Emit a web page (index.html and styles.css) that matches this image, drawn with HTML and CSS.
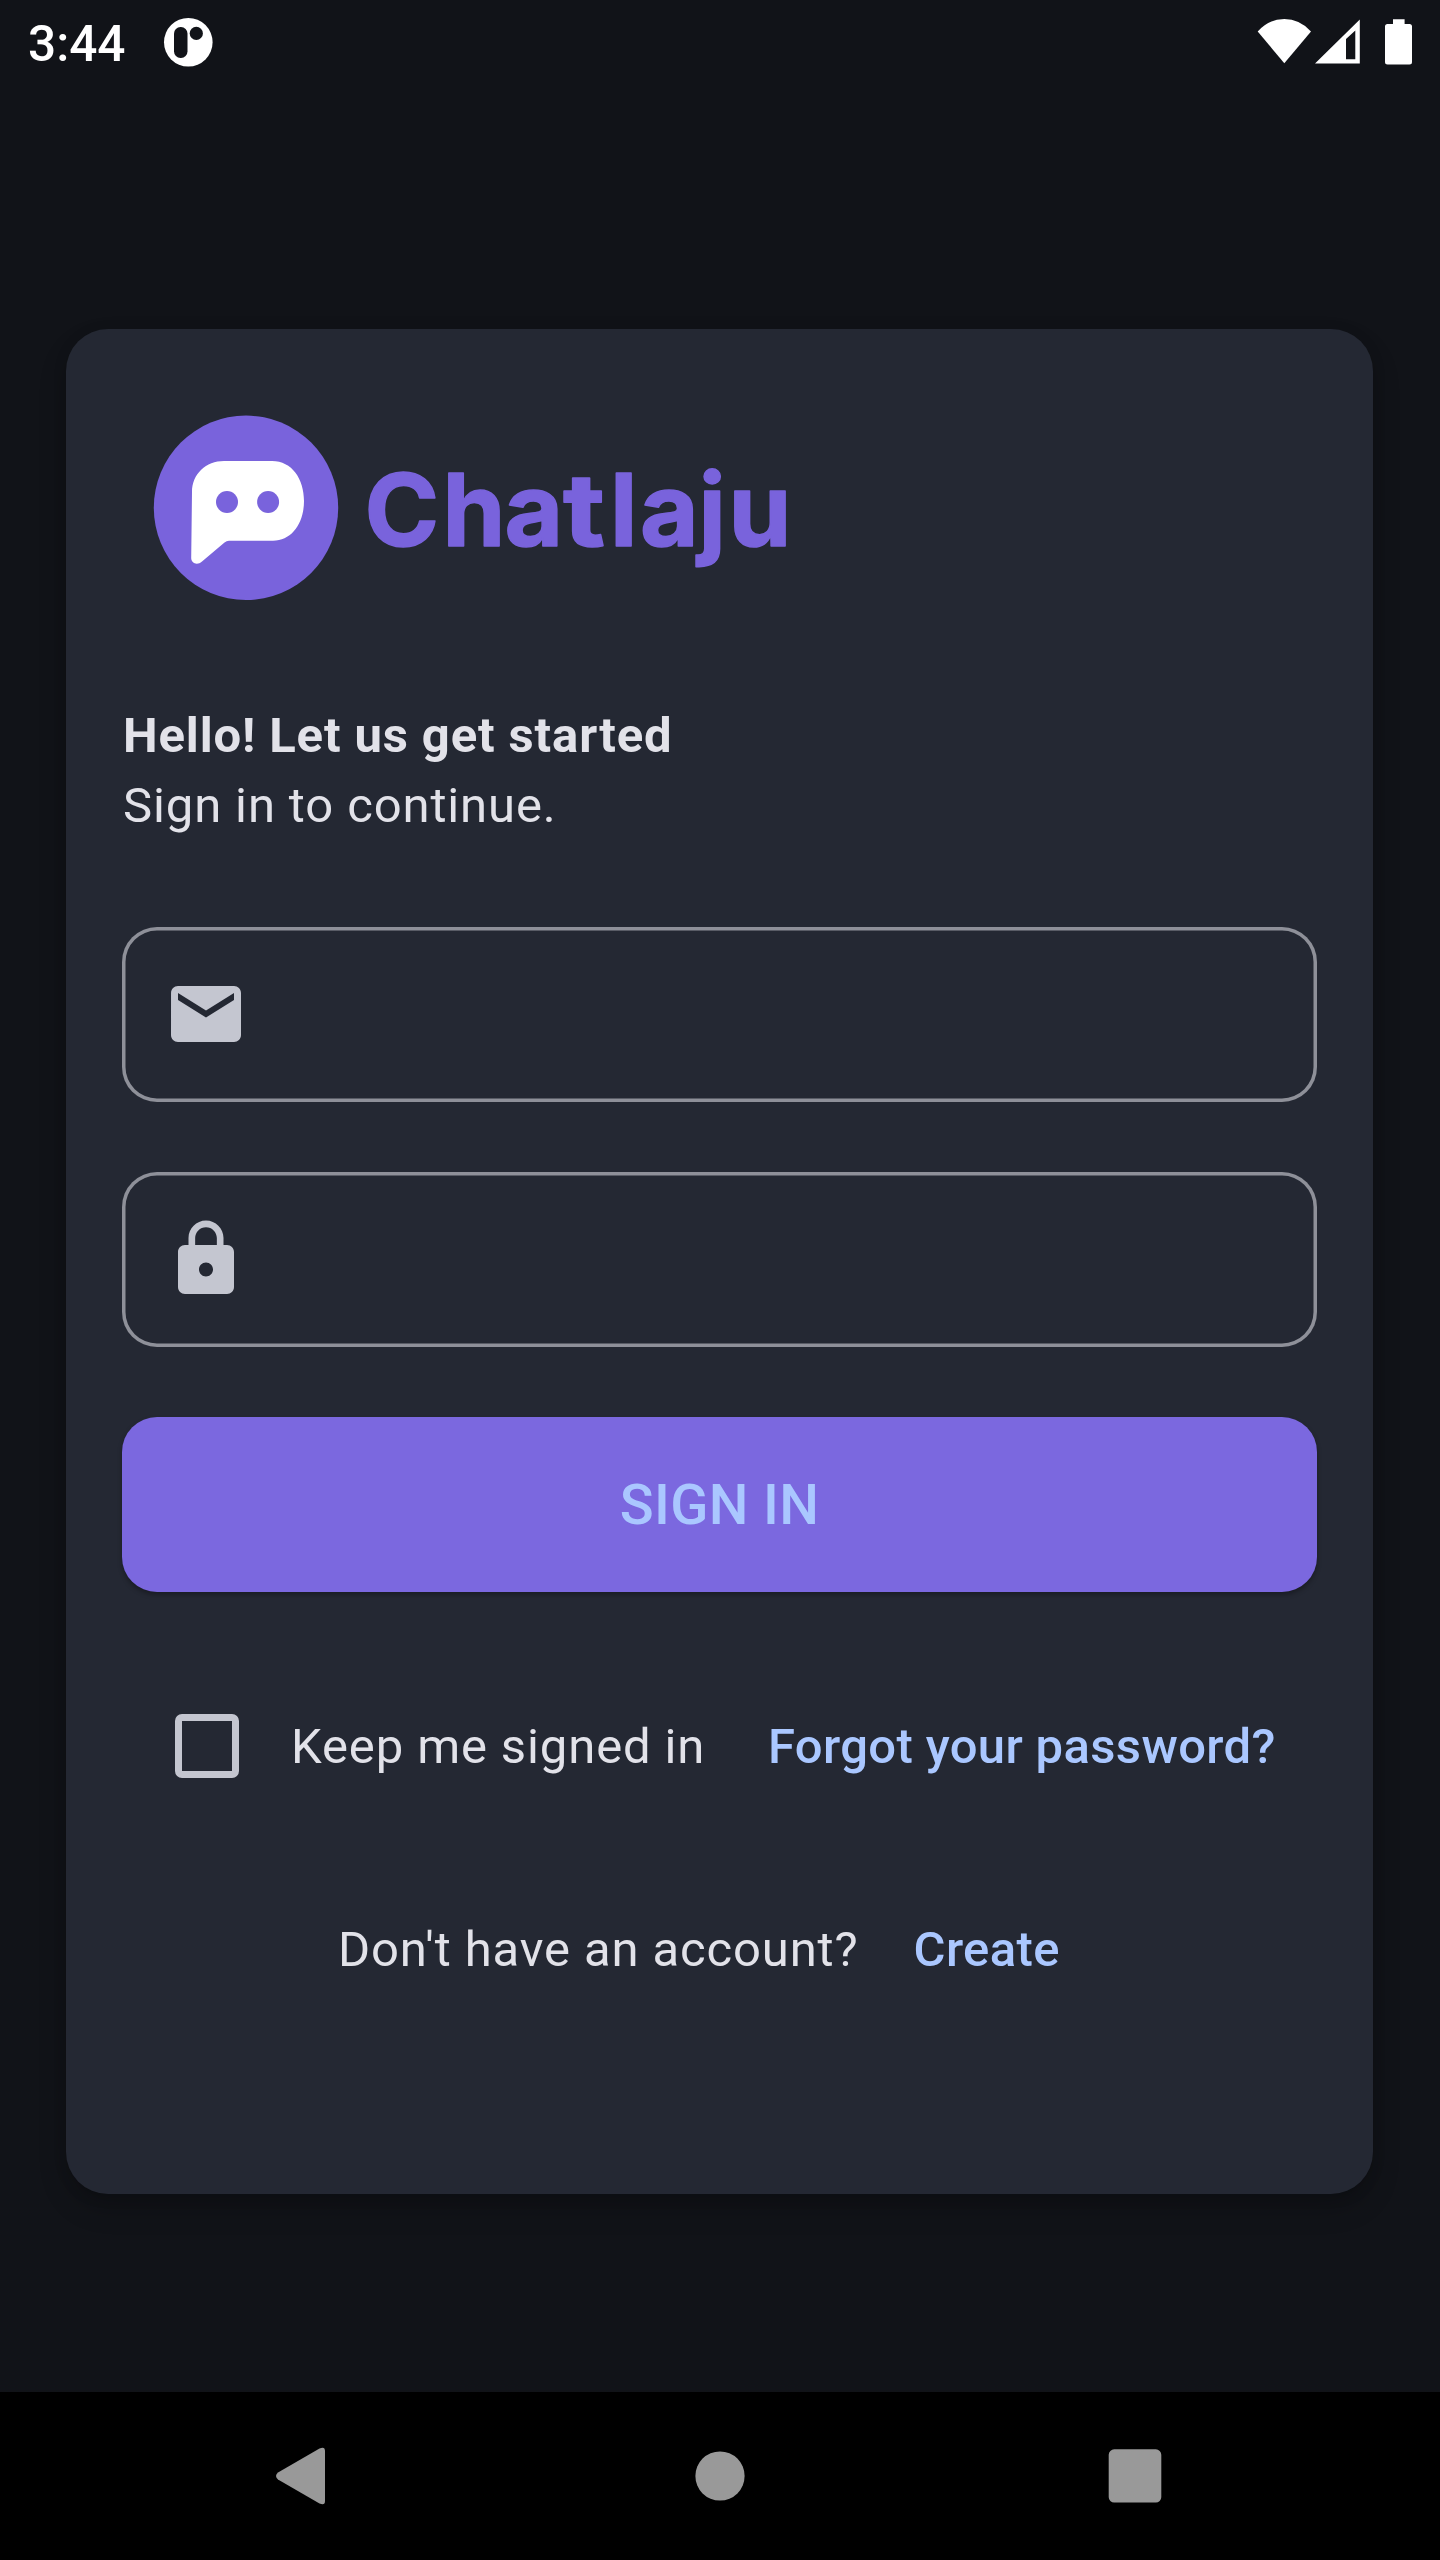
FILE: index.html
```
<!DOCTYPE html>
<html lang="en">
<head>
<meta charset="utf-8">
<title>Chatlaju</title>
<link rel="stylesheet" href="styles.css">
</head>
<body>
<header class="status">
  <span class="clock">3:44</span>
  <svg class="app-dot" width="50" height="50" viewBox="163 17 50 50">
    <circle cx="188.3" cy="42.3" r="24.3" fill="#fff"/>
    <rect x="174" y="27" width="13.5" height="31" rx="6.5" fill="#111318"/>
    <circle cx="196.3" cy="33.4" r="6.6" fill="#111318"/>
  </svg>
  <svg class="status-icons" width="160" height="50" viewBox="1255 17 160 50" fill="#fff">
    <path d="M1257.7 31.4Q1269 19 1284.3 19T1311 31.4L1284.3 63.3Z"/>
    <path fill-rule="evenodd" d="M1315 63.5L1359.8 19.5V63.5ZM1346 39V59.3H1355.3V30.5Z"/>
    <path d="M1393 19.3H1404.6V24H1409.5Q1412 24 1412 26.5V62Q1412 64.5 1409.5 64.5H1387.5Q1385 64.5 1385 62V26.5Q1385 24 1387.5 24H1393Z"/>
  </svg>
</header>
<main class="page">
  <form class="card">
    <svg class="logo" width="700" height="240" viewBox="122 395 700 240" role="img" aria-label="Chatlaju">
      <circle cx="246" cy="507.8" r="92.2" fill="#7963dc"/>
      <path fill="#fff" d="M224 461H272C292 461 304 479 304 501C304 523 292 540.7 273 540.7H229Q226.500 540.7 224.500 542.500L202 561.500C197 566 191.200 563 191.200 558L192 492C192 474 206 461 224 461Z"/>
      <circle cx="227" cy="502" r="11" fill="#7963dc"/>
      <circle cx="268.100" cy="502" r="11" fill="#7963dc"/>
      <g class="wordmark">
        <text y="546" x="364.5 442.5 504.5">Cha</text>
        <text y="546" x="563" textLength="42" lengthAdjust="spacingAndGlyphs">t</text>
        <text y="546" x="610 640 698.5 728.5">laju</text>
      </g>
    </svg>
    <p class="hello">Hello! Let us get started</p>
    <p class="line intro">Sign in to continue.</p>
    <div class="controls">
      <label class="field">
        <svg width="84" height="84" viewBox="0 0 24 24"><path d="M20 4H4c-1.100 0-1.990.9-1.990 2L2 18c0 1.100.9 2 2 2h16c1.100 0 2-.9 2-2V6c0-1.100-.9-2-2-2zm0 4l-8 5-8-5V6l8 5 8-5v2z"/></svg>
      </label>
      <label class="field">
        <svg width="84" height="84" viewBox="0 0 24 24"><path d="M18 8h-1V6c0-2.760-2.240-5-5-5S7 3.240 7 6v2H6c-1.100 0-2 .9-2 2v10c0 1.100.9 2 2 2h12c1.100 0 2-.9 2-2V10c0-1.100-.9-2-2-2zm-6 9c-1.100 0-2-.9-2-2s.9-2 2-2 2 .9 2 2-.9 2-2 2zM8.900 8V6c0-1.710 1.390-3.100 3.100-3.100s3.100 1.390 3.100 3.100v2z"/></svg>
      </label>
      <button class="submit" type="button">SIGN IN</button>
    </div>
    <div class="options">
      <span class="check"></span>
      <span class="line keep">Keep me signed in</span>
      <a class="link">Forgot your password?</a>
    </div>
    <div class="signup">
      <span class="line">Don't have an account?</span>
      <a class="link">Create</a>
    </div>
  </form>
</main>
<nav class="nav">
  <svg width="1440" height="168" viewBox="0 2392 1440 168" fill="#999">
    <path d="M278 2472.500L319.500 2448.500Q325 2446 325 2451V2501Q325 2506 319.500 2503.500L278 2479.500Q274 2476 278 2472.500Z"/>
    <circle cx="720" cy="2476" r="24.600"/>
    <rect x="1108.700" y="2449.300" width="52.600" height="53.200" rx="5.500"/>
  </svg>
</nav>
</body>
</html>
```
FILE: styles.css
```
* { box-sizing: border-box; }
body {
  margin: 0;
  width: 1440px;
  height: 2560px;
  display: flex;
  flex-direction: column;
  overflow: hidden;
  background: #111318;
  font-family: Roboto, "Liberation Sans", sans-serif;
  font-size: 49px;
  line-height: 70px;
  color: #e2e2e9;
}
svg { display: block; flex: none; }
p { margin: 0; }
.status {
  height: 84px;
  display: flex;
  align-items: center;
  padding: 0 25px 0 28px;
}
.clock {
  width: 135px;
  font-size: 49.5px;
  font-weight: 500;
  color: #fff;
  white-space: nowrap;
  padding-top: 4px;
}
.status-icons { margin-left: auto; }
.page { flex: 1; padding: 245px 67px 0 66px; }
.card {
  height: 1865px;
  padding: 66px 56px 0;
  border-radius: 42px;
  background: #242833;
  box-shadow: 0 14px 28px rgba(0, 0, 0, .2), 0 3px 14px rgba(0, 0, 0, .12);
}
.logo { margin-bottom: 66px; }
.wordmark {
  font-family: Inter, sans-serif;
  font-size: 101px;
  font-weight: 700;
  fill: #7963dc;
  stroke: #7963dc;
  stroke-width: 1.5px;
  stroke-linejoin: round;
}
.hello { font-weight: 700; letter-spacing: .875px; white-space: nowrap; }
.line { letter-spacing: .875px; white-space: nowrap; }
.hello, .intro { padding-left: 1px; }
.controls { display: grid; gap: 70px; padding-top: 86px; }
.field {
  height: 175px;
  display: flex;
  align-items: center;
  padding: 0 0 2px 42px;
  border-radius: 35px;
  box-shadow: inset 0 0 0 3.5px #8e9099;
  fill: #c4c6d0;
}
.submit {
  height: 175px;
  padding: 0;
  border: 0;
  border-radius: 35px;
  background: #7b68df;
  box-shadow: 0 3px 5px rgba(0, 0, 0, .3);
  font: 500 56px/70px Roboto, sans-serif;
  letter-spacing: .35px;
  color: #aac7ff;
}
.options {
  display: flex;
  align-items: center;
  height: 70px;
  margin-top: 119px;
  padding-left: 53px;
}
.check {
  width: 64px;
  height: 64px;
  border: 7px solid #c4c6d0;
  border-radius: 7px;
}
.options .line, .options .link { padding-top: 2px; }
.keep { width: 477px; margin-left: 52px; }
.link { color: #aac7ff; font-weight: 500; letter-spacing: .35px; white-space: nowrap; }
.signup { display: flex; gap: 55px; margin-top: 134px; padding-left: 216px; }
.nav { height: 168px; background: #000; }
```
